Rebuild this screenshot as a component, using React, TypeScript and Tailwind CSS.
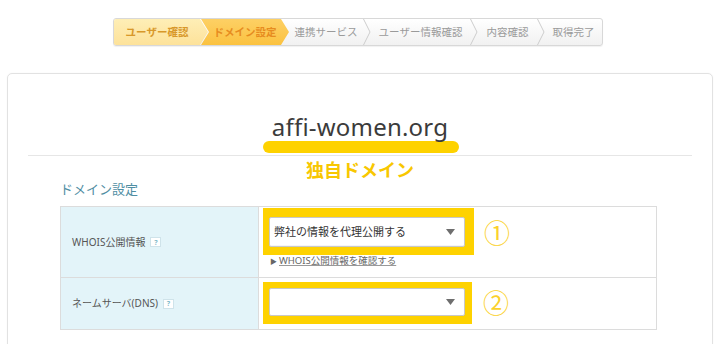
import React from "react";

function Chevron() {
  return (
    <svg width="8" height="26" viewBox="0 0 8 26" className="shrink-0">
      <polyline points="0.5,0 7,13 0.5,26" fill="none" stroke="#cdcdcd" strokeWidth="1" />
    </svg>
  );
}

function Help() {
  return (
    <span className="ml-[5px] inline-flex h-[10px] w-[11px] items-center justify-center border border-[#cfe3ea] bg-white text-[7px] font-bold leading-none text-[#7fb9c9]">
      ?
    </span>
  );
}

function Arrow() {
  return (
    <svg width="9" height="6" viewBox="0 0 9 6">
      <polygon points="0,0 9,0 4.5,6" fill="#6e6e6e" />
    </svg>
  );
}

export default function App() {
  return (
    <div className="h-[344px] w-[720px] overflow-hidden bg-white font-['Noto_Sans','Noto_Sans_CJK_JP',sans-serif] text-[#333]">
      {/* progress */}
      <div className="ml-[113px] pt-[18px]">
        <div className="flex h-[28px] w-[490px] overflow-hidden rounded-[3px] border border-[#d8d8d8] bg-gradient-to-b from-white to-[#f1f1f1] text-[10.5px] leading-none shadow-[0_1px_1px_rgba(0,0,0,0.06)]">
          <div className="flex w-[94px] shrink-0 items-center justify-center bg-gradient-to-b from-[#feeeb6] to-[#fde29a] pr-[8px] font-bold text-[#d8982a] [clip-path:polygon(0_0,calc(100%_-_8px)_0,100%_50%,calc(100%_-_8px)_100%,0_100%)]">
            ユーザー確認
          </div>
          <div className="ml-[-7px] flex w-[88px] shrink-0 items-center justify-center bg-gradient-to-b from-[#fdd064] to-[#fbc23f] pl-[8px] pr-[8px] font-bold text-[#e78c1f] [clip-path:polygon(0_0,calc(100%_-_8px)_0,100%_50%,calc(100%_-_8px)_100%,0_100%,8px_50%)]">
            ドメイン設定
          </div>
          <div className="flex w-[74px] shrink-0 items-center justify-center text-[#9a9a9a]">連携サービス</div>
          <Chevron />
          <div className="flex w-[99px] shrink-0 items-center justify-center text-[#9a9a9a]">ユーザー情報確認</div>
          <Chevron />
          <div className="flex w-[59px] shrink-0 items-center justify-center text-[#9a9a9a]">内容確認</div>
          <Chevron />
          <div className="flex w-[57px] shrink-0 items-center justify-center text-[#9a9a9a]">取得完了</div>
        </div>
      </div>

      {/* card */}
      <div className="mx-[7px] mt-[27px] h-[300px] rounded-[5px] border border-[#e2e2e2] bg-white shadow-[0_0_2px_rgba(0,0,0,0.04)]">
        <div className="pt-[37px] text-center text-[24px] leading-[32px] tracking-[0.2px] text-[#3b3b3b]">
          affi-women.org
        </div>
        <div className="-mt-[2px] ml-[255px] h-[12px] w-[196px] rounded-full bg-[#fed200]" />
        <div className="mx-[20px] mt-[2px] h-px bg-[#e6e6e6]" />
        <div className="mt-[4px] text-center text-[18px] font-bold leading-[21px] text-[#f8c700]">独自ドメイン</div>
        <div className="ml-[52px] text-[13px] leading-[17px] text-[#4f8ea3]">ドメイン設定</div>

        <div className="ml-[52px] mt-[8px] w-[597px] border border-[#dcdcdc]">
          {/* row 1 */}
          <div className="flex h-[71px] border-b border-[#dcdcdc]">
            <div className="flex w-[198px] shrink-0 items-center border-r border-[#dcdcdc] bg-[#e3f4f9] pl-[11px] text-[10px] text-[#555]">
              WHOIS公開情報
              <Help />
            </div>
            <div className="pl-[4px] pt-[1px]">
              <div className="flex items-center">
                <div className="w-[211px] bg-[#fed200] pb-[8px] pl-[6px] pr-[9px] pt-[9px]">
                  <div className="flex h-[30px] items-center justify-between rounded-[2px] border border-[#c8c8c8] bg-white pl-[4px] pr-[9px] text-[11px] text-[#333] shadow-[inset_0_-1px_0_rgba(0,0,0,0.04)]">
                    <span>弊社の情報を代理公開する</span>
                    <Arrow />
                  </div>
                </div>
                <span className="ml-[10px] font-['Noto_Sans_CJK_JP',sans-serif] text-[26px] leading-none text-[#fbd12a]">①</span>
              </div>
              <div className="ml-[7px] flex h-[12px] items-center text-[9.5px] leading-none text-[#666]">
                <span className="mr-[2px] text-[7px]">▶</span>
                <span className="underline decoration-[#999]">WHOIS公開情報を確認する</span>
              </div>
            </div>
          </div>
          {/* row 2 */}
          <div className="flex h-[51px]">
            <div className="flex w-[198px] shrink-0 items-center border-r border-[#dcdcdc] bg-[#e3f4f9] pl-[11px] text-[10px] text-[#555]">
              ネームサーバ(DNS)
              <Help />
            </div>
            <div className="flex items-start pl-[4px] pt-[4px]">
              <div className="w-[209px] bg-[#fed200] pb-[8px] pl-[6px] pr-[7px] pt-[6px]">
                <div className="flex h-[28px] items-center justify-end rounded-[2px] border border-[#c8c8c8] bg-white pr-[9px]">
                  <Arrow />
                </div>
              </div>
              <span className="ml-[11px] mt-[7px] font-['Noto_Sans_CJK_JP',sans-serif] text-[26px] leading-none text-[#fbd12a]">②</span>
            </div>
          </div>
        </div>
      </div>
    </div>
  );
}
